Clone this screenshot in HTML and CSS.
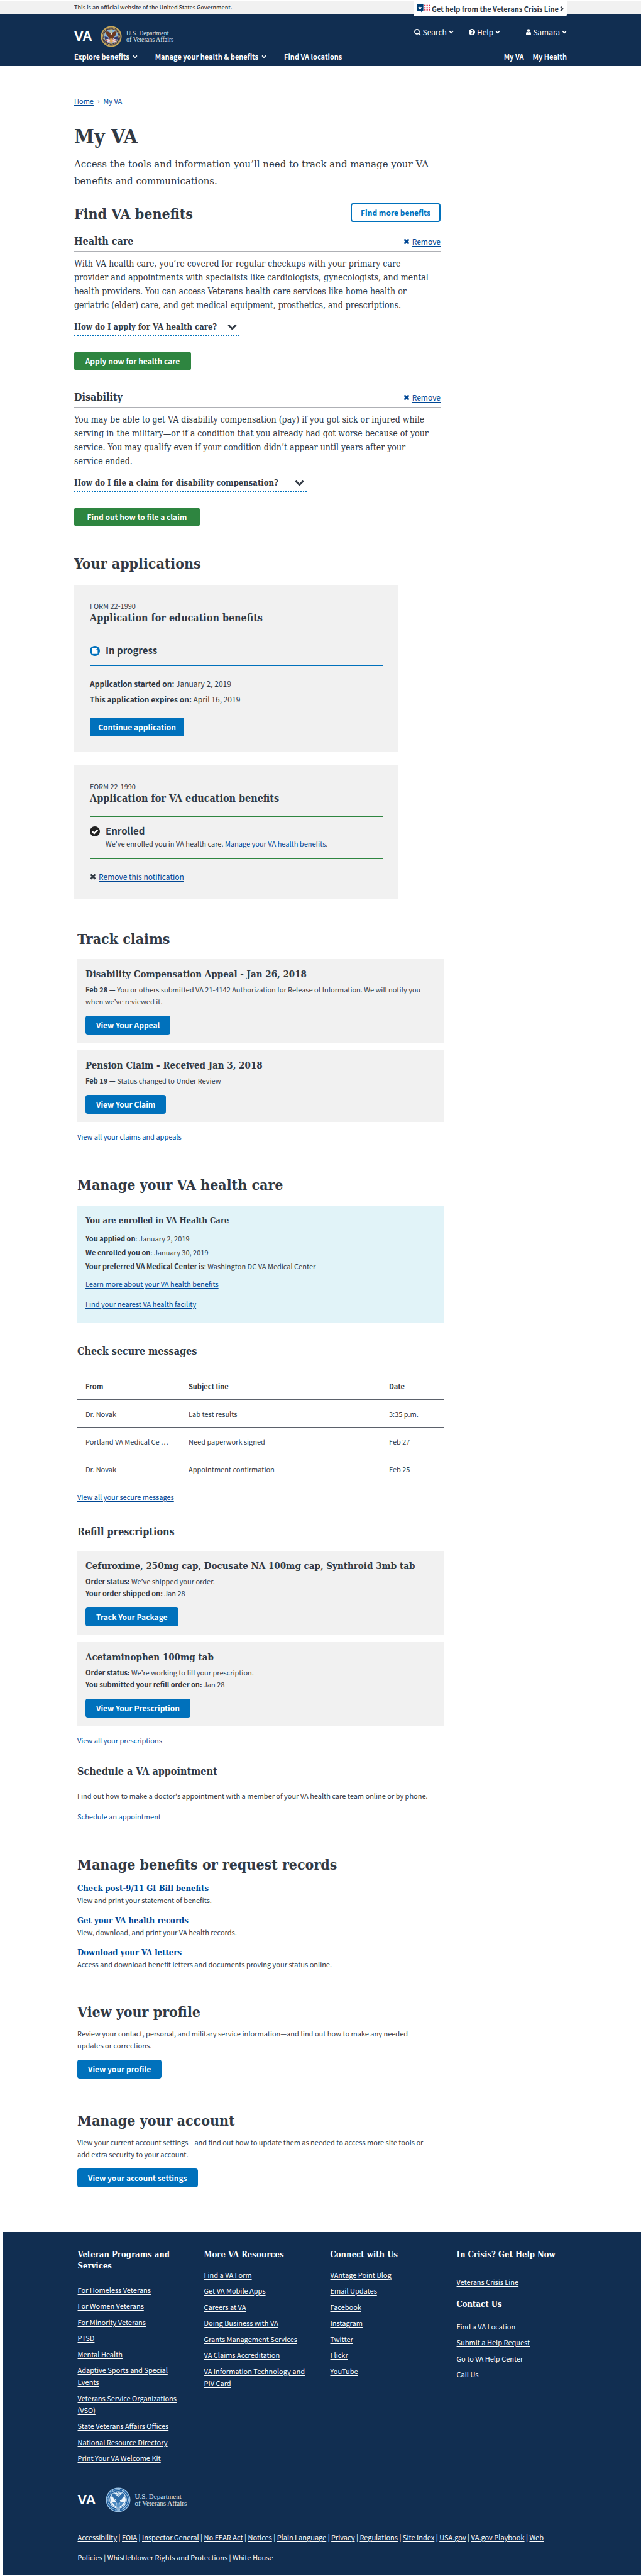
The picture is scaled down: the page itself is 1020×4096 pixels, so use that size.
FILE: index.html
```html
<!DOCTYPE html>
<html lang="en">
<head>
<meta charset="utf-8">
<meta name="viewport" content="width=device-width, initial-scale=1">
<title>My VA</title>
<link rel="stylesheet" href="styles.css">
</head>
<body>
<svg class="sprite" aria-hidden="true">
  <symbol id="chevron" viewBox="0 0 10 8"><path d="M1 1.800 5 5.800 9 1.800" fill="none" stroke="currentColor" stroke-width="2"/></symbol>
  <symbol id="cross" viewBox="0 0 10 10"><path d="M1.500 1.500 8.500 8.500M8.500 1.500 1.500 8.500" fill="none" stroke="currentColor" stroke-width="3"/></symbol>
</svg>

<div class="gov-bar">
  <div class="container gov-inner">
    <span>This is an official website of the United States Government.</span>
    <a class="crisis" href="#">
      <svg width="22" height="14" viewBox="0 0 28 18" aria-hidden="true">
        <path d="M0 0h13.500v13H11v4L7.500 13H0z" fill="#003e73"/>
        <path d="M6.800 2.500 7.900 5.500h3.100L8.500 7.400l.9 3-2.600-1.800-2.600 1.800.9-3L2.600 5.500h3.100z" fill="#fff"/>
        <path d="M16.800 1v12M21.300 1v12M25.800 1v12" stroke="#e31c3d" stroke-width="2.600" stroke-dasharray="2.500 2"/>
      </svg>
      Get help from the Veterans Crisis Line
      <svg width="6" height="10" viewBox="0 0 6 10" aria-hidden="true"><path d="M1.200 1.500 4.500 5 1.200 8.500" fill="none" stroke="currentColor" stroke-width="2"/></svg>
    </a>
  </div>
</div>

<header class="site-header">
  <div class="container">
    <div class="header-top">
      <a class="logo" href="#">
        <span class="logo-va">VA</span>
        <span class="logo-rule"></span>
        <svg class="seal" viewBox="0 0 42 42" aria-hidden="true">
          <circle cx="21" cy="21" r="20.500" fill="#c9a95a"/>
          <circle cx="21" cy="21" r="18" fill="#2b2d4f"/>
          <circle cx="21" cy="21" r="16.500" fill="none" stroke="#c9a95a" stroke-width="2" stroke-dasharray="1.200 1"/>
          <circle cx="21" cy="21" r="14.500" fill="#c9a95a"/>
          <circle cx="21" cy="21" r="13.800" fill="#86b5dc"/>
          <path d="M8 21l7 2 3 9-4 1c-4-3-6-7-6-12zM34 21l-7 2-3 9 4 1c4-3 6-7 6-12z" fill="#34386b"/>
          <path d="M10 27l8-2 1 7-5 1zM32 27l-8-2-1 7 5 1z" fill="#e8dcdc"/>
          <path d="M11 29l7-2M13 32l5-1M31 29l-7-2M29 32l-5-1" stroke="#bf3341" stroke-width="1.300"/>
          <circle cx="21" cy="10.500" r="2" fill="none" stroke="#e2c762" stroke-width="1.600" stroke-dasharray="1 .8"/>
          <path d="M21 15l2.500-1.500c2-2 5-2.500 8-2-.500 6-2.500 9-6 12l-2 3.500h-5l-2-3.500c-3.500-3-5.500-6-6-12 3-.5 6 0 8 2z" fill="#6d3a22"/>
          <path d="M19 25h4.500l1 7-3 2-3.500-2z" fill="#dca55a"/>
          <path d="M20 13.500l3.500.5-1.500 3-2.500.5z" fill="#f2ece0"/>
        </svg>
        <span class="logo-name">U.S. Department<br>of Veterans Affairs</span>
      </a>
      <div class="tools">
        <button type="button" class="tool">
          <svg width="11" height="11" viewBox="0 0 13 13" aria-hidden="true"><circle cx="5.300" cy="5.300" r="4.200" fill="none" stroke="currentColor" stroke-width="2"/><path d="M8.500 8.500l3.500 3.500" stroke="currentColor" stroke-width="2.400"/></svg>
          Search
          <svg class="chev" aria-hidden="true"><use href="#chevron"/></svg>
        </button>
        <button type="button" class="tool tool-help">
          <svg width="10" height="10" viewBox="0 0 12 12" aria-hidden="true"><circle cx="6" cy="6" r="6" fill="#fff"/><path d="M4 4.700C4 3.400 5 2.900 6.100 2.900s2 .6 2 1.700c0 1.500-2.100 1.400-2.100 2.700" fill="none" stroke="#112e51" stroke-width="1.500"/><path d="M5.200 8.300h1.600v1.500H5.200z" fill="#112e51"/></svg>
          Help
          <svg class="chev" aria-hidden="true"><use href="#chevron"/></svg>
        </button>
        <button type="button" class="tool tool-user">
          <svg width="8" height="10" viewBox="0 0 10 12" aria-hidden="true"><circle cx="5" cy="3" r="3" fill="#fff"/><path d="M0 10c0-3 1-4.500 2.500-4.500C4 7 6 7 7.500 5.500 9 5.500 10 7 10 10c0 1.200-.8 2-2 2H2c-1.200 0-2-.8-2-2z" fill="#fff"/></svg>
          Samara
          <svg class="chev" aria-hidden="true"><use href="#chevron"/></svg>
        </button>
      </div>
    </div>
    <nav class="main-nav">
      <button type="button">Explore benefits <svg class="chev" aria-hidden="true"><use href="#chevron"/></svg></button>
      <button type="button">Manage your health &amp; benefits <svg class="chev" aria-hidden="true"><use href="#chevron"/></svg></button>
      <a href="#">Find VA locations</a>
      <span class="nav-right"><a href="#">My VA</a><a href="#">My Health</a></span>
    </nav>
  </div>
</header>

<main class="container">
  <nav class="breadcrumb"><a href="#">Home</a><span>›</span><span>My VA</span></nav>

  <div class="upper">
    <h1>My VA</h1>
    <p class="intro">Access the tools and information you’ll need to track and manage your VA benefits and communications.</p>

    <section class="find">
      <div class="find-head">
        <h2>Find VA benefits</h2>
        <button type="button" class="btn btn-outline">Find more benefits</button>
      </div>
      <article class="benefit">
        <div class="benefit-head">
          <h3>Health care</h3>
          <a class="remove" href="#"><svg class="x" aria-hidden="true"><use href="#cross"/></svg><span>Remove</span></a>
        </div>
        <p>With VA health care, you’re covered for regular checkups with your primary care<br>provider and appointments with specialists like cardiologists, gynecologists, and mental<br>health providers. You can access Veterans health care services like home health or<br>geriatric (elder) care, and get medical equipment, prosthetics, and prescriptions.</p>
        <button type="button" class="expander">How do I apply for VA health care? <svg class="chev-lg" aria-hidden="true"><use href="#chevron"/></svg></button>
        <button type="button" class="btn btn-green">Apply now for health care</button>
      </article>
      <article class="benefit benefit-next">
        <div class="benefit-head">
          <h3>Disability</h3>
          <a class="remove" href="#"><svg class="x" aria-hidden="true"><use href="#cross"/></svg><span>Remove</span></a>
        </div>
        <p>You may be able to get VA disability compensation (pay) if you got sick or injured while<br>serving in the military—or if a condition that you already had got worse because of your<br>service. You may qualify even if your condition didn’t appear until years after your<br>service ended.</p>
        <button type="button" class="expander expander-wide">How do I file a claim for disability compensation? <svg class="chev-lg" aria-hidden="true"><use href="#chevron"/></svg></button>
        <button type="button" class="btn btn-green btn-green-wide">Find out how to file a claim</button>
      </article>
    </section>

    <section class="applications">
      <h2>Your applications</h2>
      <article class="app-card">
        <p class="form-no">FORM 22-1990</p>
        <h3>Application for education benefits</h3>
        <div class="status">
          <svg width="16" height="16" viewBox="0 0 20 20" aria-hidden="true"><circle cx="10" cy="10" r="10" fill="#0071bc"/><path d="M5 4h6.500v4H15.500v8H5z" fill="#fff"/><path d="M12.500 4l3 3h-3z" fill="#fff"/></svg>
          <div><strong>In progress</strong></div>
        </div>
        <p class="fact"><b>Application started on:</b> January 2, 2019</p>
        <p class="fact fact-next"><b>This application expires on:</b> April 16, 2019</p>
        <button type="button" class="btn btn-continue">Continue application</button>
      </article>
      <article class="app-card">
        <p class="form-no">FORM 22-1990</p>
        <h3>Application for VA education benefits</h3>
        <div class="status status-done">
          <svg width="16" height="16" viewBox="0 0 20 20" aria-hidden="true"><circle cx="10" cy="10" r="10" fill="#212121"/><path d="M4.800 10.300 8.600 13.800 15.300 7" fill="none" stroke="#fff" stroke-width="3"/></svg>
          <div><strong>Enrolled</strong><p>We've enrolled you in VA health care. <a href="#">Manage your VA health benefits</a>.</p></div>
        </div>
        <p class="fact dismiss"><svg class="x" aria-hidden="true"><use href="#cross"/></svg><a href="#">Remove this notification</a></p>
      </article>
    </section>
  </div>

  <div class="lower">
    <section class="claims">
      <h2>Track claims</h2>
      <article class="card">
        <h3>Disability Compensation Appeal - Jan 26, 2018</h3>
        <p><b>Feb 28 —</b> You or others submitted VA 21-4142 Authorization for Release of Information. We will notify you<br>when we’ve reviewed it.</p>
        <button type="button" class="btn">View Your Appeal</button>
      </article>
      <article class="card">
        <h3>Pension Claim - Received Jan 3, 2018</h3>
        <p><b>Feb 19 —</b> Status changed to Under Review</p>
        <button type="button" class="btn">View Your Claim</button>
      </article>
      <p class="more"><a href="#">View all your claims and appeals</a></p>
    </section>

    <section>
      <h2>Manage your VA health care</h2>
      <div class="enrolled">
        <h3>You are enrolled in VA Health Care</h3>
        <p><b>You applied on</b>: January 2, 2019</p>
        <p><b>We enrolled you on</b>: January 30, 2019</p>
        <p><b>Your preferred VA Medical Center is</b>: Washington DC VA Medical Center</p>
        <a href="#">Learn more about your VA health benefits</a>
        <a href="#">Find your nearest VA health facility</a>
      </div>

      <h3 class="sub">Check secure messages</h3>
      <table>
        <thead><tr><th scope="col">From</th><th scope="col">Subject line</th><th scope="col">Date</th></tr></thead>
        <tbody>
          <tr><td>Dr. Novak</td><td>Lab test results</td><td>3:35 p.m.</td></tr>
          <tr><td>Portland VA Medical Ce …</td><td>Need paperwork signed</td><td>Feb 27</td></tr>
          <tr><td>Dr. Novak</td><td>Appointment confirmation</td><td>Feb 25</td></tr>
        </tbody>
      </table>
      <p class="more"><a href="#">View all your secure messages</a></p>

      <h3 class="sub refill">Refill prescriptions</h3>
      <article class="card">
        <h3>Cefuroxime, 250mg cap, Docusate NA 100mg cap, Synthroid 3mb tab</h3>
        <p><b>Order status:</b> We’ve shipped your order.</p>
        <p><b>Your order shipped on:</b> Jan 28</p>
        <button type="button" class="btn">Track Your Package</button>
      </article>
      <article class="card">
        <h3>Acetaminophen 100mg tab</h3>
        <p><b>Order status:</b> We’re working to fill your prescription.</p>
        <p><b>You submitted your refill order on:</b> Jan 28</p>
        <button type="button" class="btn">View Your Prescription</button>
      </article>
      <p class="more"><a href="#">View all your prescriptions</a></p>

      <h3 class="sub schedule">Schedule a VA appointment</h3>
      <p class="schedule-text">Find out how to make a doctor's appointment with a member of your VA health care team online or by phone.</p>
      <p class="more"><a href="#">Schedule an appointment</a></p>
    </section>

    <section>
      <h2>Manage benefits or request records</h2>
      <ul class="records">
        <li><a href="#">Check post-9/11 GI Bill benefits</a><p>View and print your statement of benefits.</p></li>
        <li><a href="#">Get your VA health records</a><p>View, download, and print your VA health records.</p></li>
        <li><a href="#">Download your VA letters</a><p>Access and download benefit letters and documents proving your status online.</p></li>
      </ul>
    </section>

    <section class="plain">
      <h2>View your profile</h2>
      <p>Review your contact, personal, and military service information—and find out how to make any needed<br>updates or corrections.</p>
      <button type="button" class="btn">View your profile</button>
    </section>

    <section class="plain">
      <h2>Manage your account</h2>
      <p>View your current account settings—and find out how to update them as needed to access more site tools or<br>add extra security to your account.</p>
      <button type="button" class="btn">View your account settings</button>
    </section>
  </div>
</main>

<footer>
  <div class="footer-inner">
    <div class="footer-cols">
      <div class="col-programs">
        <h4>Veteran Programs and Services</h4>
        <ul>
          <li><a href="#">For Homeless Veterans</a></li>
          <li><a href="#">For Women Veterans</a></li>
          <li><a href="#">For Minority Veterans</a></li>
          <li><a href="#">PTSD</a></li>
          <li><a href="#">Mental Health</a></li>
          <li><a href="#">Adaptive Sports and Special Events</a></li>
          <li><a href="#">Veterans Service Organizations (VSO)</a></li>
          <li><a href="#">State Veterans Affairs Offices</a></li>
          <li><a href="#">National Resource Directory</a></li>
          <li><a href="#">Print Your VA Welcome Kit</a></li>
        </ul>
      </div>
      <div>
        <h4>More VA Resources</h4>
        <ul>
          <li><a href="#">Find a VA Form</a></li>
          <li><a href="#">Get VA Mobile Apps</a></li>
          <li><a href="#">Careers at VA</a></li>
          <li><a href="#">Doing Business with VA</a></li>
          <li><a href="#">Grants Management Services</a></li>
          <li><a href="#">VA Claims Accreditation</a></li>
          <li><a href="#">VA Information Technology and PIV Card</a></li>
        </ul>
      </div>
      <div>
        <h4>Connect with Us</h4>
        <ul>
          <li><a href="#">VAntage Point Blog</a></li>
          <li><a href="#">Email Updates</a></li>
          <li><a href="#">Facebook</a></li>
          <li><a href="#">Instagram</a></li>
          <li><a href="#">Twitter</a></li>
          <li><a href="#">Flickr</a></li>
          <li><a href="#">YouTube</a></li>
        </ul>
      </div>
      <div class="col-contact">
        <h4>In Crisis? Get Help Now</h4>
        <ul><li><a href="#">Veterans Crisis Line</a></li></ul>
        <h4>Contact Us</h4>
        <ul>
          <li><a href="#">Find a VA Location</a></li>
          <li><a href="#">Submit a Help Request</a></li>
          <li><a href="#">Go to VA Help Center</a></li>
          <li><a href="#">Call Us</a></li>
        </ul>
      </div>
    </div>
    <a class="logo logo-footer" href="#">
      <span class="logo-va">VA</span>
      <span class="logo-rule"></span>
      <svg class="seal" viewBox="0 0 42 42" aria-hidden="true">
        <circle cx="21" cy="21" r="20.500" fill="#9cc3e6"/>
        <circle cx="21" cy="21" r="19" fill="#1f5f9f"/>
        <circle cx="21" cy="21" r="16.800" fill="none" stroke="#a9cbe8" stroke-width="2" stroke-dasharray="1.300 1"/>
        <circle cx="21" cy="21" r="14.300" fill="#fff"/>
        <circle cx="21" cy="21" r="13.400" fill="#3f7fba"/>
        <circle cx="21" cy="21" r="12.500" fill="#eef5fb"/>
        <path d="M21 16l2-2c2-2.500 5-4 8-3.500 0 5-2 9-6 12l-2 4.500h-4l-2-4.500c-4-3-6-7-6-12 3-.5 6 1 8 3.500z" fill="#2e6ca8"/>
        <path d="M11 25l7-1 1 8-4-2zM31 25l-7-1-1 8 4-2z" fill="#4c89c0"/>
        <path d="M12 17l7 6M30 17l-7 6M19 27v6M22 27v6" stroke="#fff" stroke-width="1"/>
        <path d="M19 26h4l1 6-3 2-3-2z" fill="#5a93c6"/>
        <circle cx="21" cy="10.800" r="2" fill="none" stroke="#2e6ca8" stroke-width="2" stroke-dasharray="1.300 1"/>
      </svg>
      <span class="logo-name">U.S. Department<br>of Veterans Affairs</span>
    </a>
    <p class="legal"><a href="#">Accessibility</a> | <a href="#">FOIA</a> | <a href="#">Inspector General</a> | <a href="#">No FEAR Act</a> | <a href="#">Notices</a> | <a href="#">Plain Language</a> | <a href="#">Privacy</a> | <a href="#">Regulations</a> | <a href="#">Site Index</a> | <a href="#">USA.gov</a> | <a href="#">VA.gov Playbook</a> | <a href="#">Web Policies</a> | <a href="#">Whistleblower Rights and Protections</a> | <a href="#">White House</a></p>
  </div>
</footer>
</body>
</html>
```
FILE: styles.css
```css
:root {
  --ink: #323a45;
  --navy: #112e51;
  --blue: #0071bc;
  --link: #004795;
  --green: #2e8540;
  --gray: #f1f1f1;
  --serif: "DejaVu Serif Condensed", "DejaVu Serif", serif;
  --sans: "Noto Sans CJK KR", "Noto Sans", sans-serif;
}
* { box-sizing: border-box; }
body {
  margin: 0;
  padding-top: 2px;
  background: #fff;
  color: var(--ink);
  font: 11px/19px var(--sans);
}
h1, h2, h3, h4, p, ul { margin: 0; padding: 0; font-weight: normal; }
ul { list-style: none; }
h1, h2, h3, h4 { font-family: var(--serif); font-weight: bold; }
a { color: var(--link); text-underline-offset: 2px; }
button { font: inherit; color: inherit; border: 0; background: none; padding: 0; cursor: pointer; }
.sprite { display: none; }
.container { max-width: 784px; margin: 0 auto; }

.gov-bar { background: var(--gray); height: 20px; }
.gov-inner { display: flex; justify-content: space-between; align-items: flex-start; font-size: 9px; line-height: 20px; font-weight: 500; }
.crisis {
  display: flex; align-items: center; justify-content: space-between;
  width: 244px; height: 24px; padding: 0 5px;
  background: #fff; border-radius: 0 0 3px 3px;
  color: var(--ink); font-size: 11px; font-weight: bold; text-decoration: none; white-space: nowrap;
}

.site-header { background: var(--navy); color: #fff; padding: 19px 0 5px; }
.site-header a { color: #fff; text-decoration: none; }
.header-top { display: flex; justify-content: space-between; align-items: flex-start; }
.logo { display: flex; align-items: center; height: 34px; color: #fff; text-decoration: none; }
.logo-va { font: bold 22px/28px "Liberation Sans", sans-serif; width: 28px; }
.logo-rule { width: 1px; height: 26px; background: #566b85; margin: 0 7px 0 6px; }
.seal { width: 34px; height: 34px; }
.logo-name { font: 10px/10px "Liberation Serif", serif; margin-left: 7px; color: #dfe4ea; }
.tools { display: flex; font-size: 12px; line-height: 20px; }
.tool { display: flex; align-items: center; gap: 3px; }
.tool-help { margin-left: 24px; }
.tool-user { margin-left: 41px; }
.chev { width: 8px; height: 6px; }
.main-nav { display: flex; gap: 28px; margin-top: 5px; line-height: 20px; font-weight: bold; }
.main-nav button { display: flex; align-items: center; gap: 5px; }
.nav-right { margin-left: auto; display: flex; gap: 14px; }

main { padding-top: 45px; }
.breadcrumb { display: flex; gap: 6px; line-height: 20px; color: var(--link); }
.upper { max-width: 583px; }
h1 { font-size: 32px; line-height: 36px; margin-top: 29px; }
.intro { font: 15px/27px "DejaVu Serif", serif; margin-top: 13px; }
h2 { font-size: 23px; line-height: 34px; }
h3 { font-size: 16px; line-height: 22px; }

.btn {
  height: 30px; padding: 0 17px; border-radius: 4px;
  background: var(--blue); color: #fff;
  font-weight: bold; font-size: 12px; line-height: 30px;
}
.btn-outline { border: 2px solid var(--blue); background: #fff; color: var(--blue); width: 143px; padding: 0; line-height: 26px; }
.btn-green { display: block; background: var(--green); margin-top: 24px; width: 186px; padding: 0; }
.btn-green-wide { width: 200px; }

.find { margin-top: 21px; }
.find-head { display: flex; justify-content: space-between; align-items: flex-start; }
.benefit { margin-top: 15px; }
.benefit-next { margin-top: 31px; }
.benefit-head { display: flex; justify-content: space-between; border-bottom: 1px solid #aeb0b5; padding-bottom: 3px; line-height: 24px; }
.benefit-head h3 { line-height: 24px; }
.benefit p { font: 14px/22px var(--serif); margin-top: 8px; }
.remove { display: flex; align-items: center; gap: 4px; font-size: 12px; text-decoration: none; }
.remove span { text-decoration: underline; }
.x { width: 10px; height: 10px; }
.expander {
  display: flex; align-items: center; justify-content: space-between;
  width: 263px; margin-top: 13px; padding: 0 4px 2px 0;
  border-bottom: 2px dotted var(--blue);
  font: bold 13px/22px var(--serif); white-space: nowrap;
}
.expander-wide { width: 370px; }
.chev-lg { width: 15px; height: 12px; }

.applications { margin-top: 42px; }
.app-card { max-width: 516px; background: var(--gray); padding: 25px; margin-top: 21px; }
.applications h2 + .app-card { margin-top: 17px; }
.form-no { line-height: 16px; }
.app-card h3 { line-height: 24px; }
.status {
  display: flex; gap: 9px; margin: 16px 0 18px; padding: 12px 0 14px;
  border: solid var(--blue); border-width: 1px 0; line-height: 20px;
}
.status > svg { margin-top: 3px; }
.status strong { display: block; font-size: 15px; }
.status-done { border-color: var(--green); }
.fact { font-size: 12px; line-height: 20px; }
.fact-next { margin-top: 5px; }
.btn-continue { display: block; margin-top: 19px; padding: 0; width: 150px; }
.dismiss { display: flex; align-items: center; gap: 4px; }

.lower { max-width: 588px; padding-left: 5px; }
.lower section { margin-top: 50px; }
.lower .claims { margin-top: 47px; }
.card { background: var(--gray); padding: 13px; margin-top: 12px; }
.card h3 { font-size: 15px; margin-bottom: 4px; }
.card .btn { display: block; margin-top: 13px; }
h2 + .card { margin-top: 15px; }
.more { margin-top: 14px; }
.enrolled { display: flex; flex-direction: column; align-items: flex-start; background: #e1f3f8; padding: 14px 13px 20px; margin-top: 16px; }
.enrolled h3 { font-size: 13px; line-height: 20px; margin-bottom: 7px; }
.enrolled p { line-height: 22px; }
.enrolled a { margin-top: 13px; }
.enrolled p + a { margin-top: 8px; }
.sub { margin-top: 35px; }
table { width: 100%; margin-top: 22px; border-collapse: collapse; table-layout: fixed; line-height: 20px; }
th, td { text-align: left; padding: 12px 0 11px; border-bottom: 1px solid #5b616b; white-space: nowrap; }
th:first-child, td:first-child { padding-left: 13px; width: 177px; }
th:last-child, td:last-child { width: 87px; }
tbody tr:last-child td { border-bottom: 0; }
.refill + .card { margin-top: 19px; }
.schedule { margin-top: 29px; }
.schedule-text { margin-top: 18px; }
.records { display: grid; gap: 15px; margin-top: 12px; line-height: 18px; }
.records a { display: block; font: bold 13px/18px var(--serif); text-decoration: none; }
.plain p { margin: 8px 0 13px; }
.plain .btn { display: block; }

footer { margin: 71px 0 0 5px; background: var(--navy); color: #fff; padding: 27px 0 13px; }
footer a { color: #fff; }
.footer-inner { max-width: 784px; margin: 0 auto; padding-left: 3px; }
.footer-cols { display: grid; grid-template-columns: repeat(4, 1fr); gap: 23px; }
h4 { font-size: 13px; line-height: 18px; margin-bottom: 14px; }
.col-programs h4 { margin-bottom: 20px; }
.col-contact h4 { margin-bottom: 25px; }
.col-contact ul + h4 { margin: 17px 0; }
footer li + li { margin-top: 6px; }
footer li:nth-child(odd) { margin-top: 7px; }
footer li:first-child { margin-top: 0; }
.logo-footer { margin-top: 37px; height: 40px; }
.logo-footer .seal { width: 40px; height: 40px; }
.logo-footer .logo-va { width: 30px; }
.logo-footer .logo-name { font-size: 11px; line-height: 11px; }
.legal { margin-top: 23px; padding-right: 8px; line-height: 32px; }
```
